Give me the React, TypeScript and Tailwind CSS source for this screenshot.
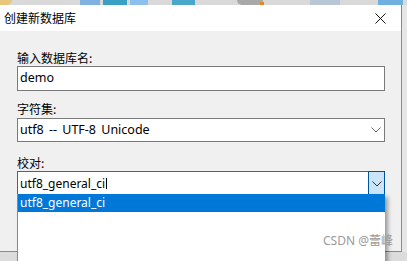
import React from "react";

const cjk = { fontFamily: '"Noto Sans CJK SC", "Noto Sans", sans-serif' };
const latin = { fontFamily: '"Noto Sans", "Noto Sans CJK SC", sans-serif' };

function Chevron({ color = "#606060" }: { color?: string }) {
  return (
    <svg width="10" height="6" viewBox="0 0 10 6" fill="none">
      <polyline points="0.5,0.5 5,5 9.5,0.5" stroke={color} strokeWidth="1" />
    </svg>
  );
}

function TopStrip() {
  return (
    <div className="relative h-[5px] w-full bg-[#d9d9d9]">
      <div className="absolute left-0 top-0 h-[5px] w-[12px] rounded-br-full bg-[#e9c77a]" />
      <div className="absolute left-[80px] top-0 h-[5px] w-[20px] bg-[#7fb2e0]" />
      <div className="absolute left-[103px] top-0 h-[5px] w-[24px] bg-[#3a9fc4]" />
      <div className="absolute left-[130px] top-0 h-[5px] w-[18px] bg-[#8cc0ec]" />
      <div className="absolute left-[172px] top-0 h-[5px] w-[23px] bg-[#4aa7c9]" />
      <div className="absolute left-[237px] top-0 h-[5px] w-[26px] rounded-b-full bg-[#a8a8a8]" />
      <div className="absolute left-[260px] top-[2px] h-[3px] w-[4px] bg-[#e08a1c]" />
      <div className="absolute left-[310px] top-0 h-[5px] w-[30px] bg-[#b9c6d3]" />
      <div className="absolute left-[378px] top-0 h-[5px] w-[25px] bg-[#6fb0de]" />
    </div>
  );
}

export default function App() {
  return (
    <div className="relative h-[261px] w-[407px] overflow-hidden bg-[#dcdcdc]">
      <TopStrip />
      <div className="flex">
        <div className="flex h-[247px] w-[402px] flex-col border-b border-r border-[#8a8a8a]">
          <div className="flex h-[26px] items-center justify-between bg-white pl-[4px] pr-[15px]">
            <span className="text-[12px] leading-[16px] text-black" style={cjk}>
              创建新数据库
            </span>
            <svg width="11" height="11" viewBox="0 0 11 11">
              <line x1="0.5" y1="0.5" x2="10.5" y2="10.5" stroke="#111" strokeWidth="1" />
              <line x1="10.5" y1="0.5" x2="0.5" y2="10.5" stroke="#111" strokeWidth="1" />
            </svg>
          </div>
          <div className="flex flex-1 flex-col bg-[#f0f0f0] pl-[17px] pr-[16px] pt-[19px]">
            <div className="text-[12px] leading-[16px] text-black" style={cjk}>
              输入数据库名:
            </div>
            <div className="flex h-[25px] items-center border border-[#7a7a7a] bg-white pl-[2px] text-[12.5px] text-black" style={latin}>
              demo
            </div>
            <div className="mt-[10px] text-[12px] leading-[16px] text-black" style={cjk}>
              字符集:
            </div>
            <div className="mt-[1px] flex h-[24px] items-center justify-between border border-[#7a7a7a] bg-white pl-[2px] pr-[3px] text-[12.5px] text-black" style={latin}>
              <span className="[word-spacing:2px]">utf8 -- UTF-8 Unicode</span>
              <Chevron />
            </div>
            <div className="mt-[13px] text-[12px] leading-[16px] text-black" style={cjk}>
              校对:
            </div>
            <div className="flex h-[25px] items-stretch border border-[#0078d7] bg-white text-[12px] text-black" style={latin}>
              <div className="flex flex-1 items-center pl-[2px]">
                <span>utf8_general_ci</span>
                <span className="ml-[1px] h-[11px] w-[1px] bg-black" />
              </div>
              <div className="-my-[1px] -mr-[1px] flex w-[17px] items-center justify-center border border-[#005499] bg-[#cce4f7]">
                <Chevron color="#333" />
              </div>
            </div>
          </div>
        </div>
        <div className="h-[247px] flex-1 bg-[#e6e6e6]" />
      </div>
      <div className="absolute left-[17px] top-[194px] h-[80px] w-[368px] border-l border-[#8a8a8a] bg-white shadow-[3px_3px_4px_rgba(0,0,0,0.35)]">
        <div className="flex h-[18px] items-center bg-[#0078d7] pl-[2px] text-[12px] text-white" style={latin}>
          utf8_general_ci
        </div>
      </div>
      <div
        className="absolute left-[323px] top-[234px] text-[12px] leading-[14px] text-[#9a9a9a]"
        style={{ fontFamily: '"Noto Sans", "Noto Sans CJK SC", sans-serif' }}
      >
        CSDN @蕾峰
      </div>
    </div>
  );
}
